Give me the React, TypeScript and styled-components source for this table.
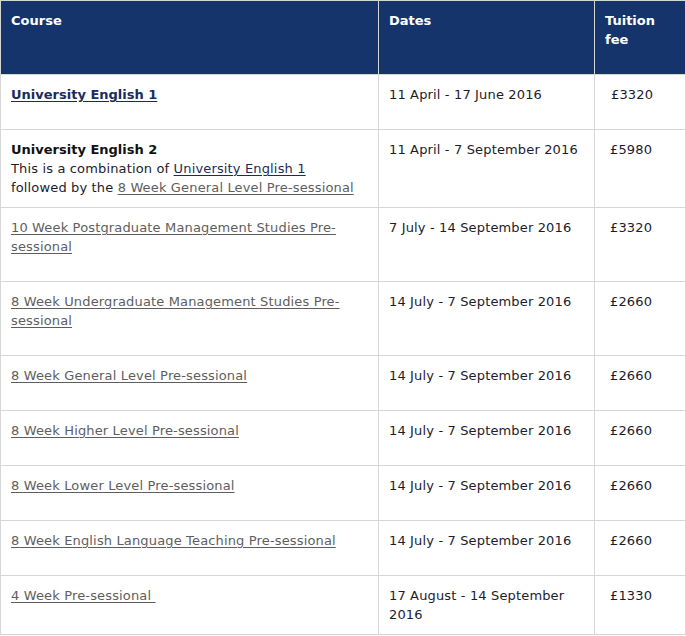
import React from "react";
import styled, { createGlobalStyle } from "styled-components";

const Global = createGlobalStyle`
  html, body { margin: 0; padding: 0; background: #fff; }
  body { font-family: "DejaVu Sans", Verdana, sans-serif; font-size: 13px; line-height: 19px; color: #1c1c2c; letter-spacing: 0.15px; }
`;

const Table = styled.table`
  width: 685px;
  border-collapse: collapse;
  table-layout: fixed;
  border: 1px solid #d6d6d6;
`;

const Col = styled.col<{ $w: number }>`
  width: ${(p) => p.$w}px;
`;

const Row = styled.tr<{ $h: number }>`
  height: ${(p) => p.$h}px;
`;

const Th = styled.th`
  background: #15346b;
  color: #fff;
  font-weight: bold;
  text-align: left;
  vertical-align: top;
  padding: 10px 10px;
  border: 1px solid #d6d6d6;
  letter-spacing: 0;
`;

const Td = styled.td<{ $indent?: number }>`
  vertical-align: top;
  padding: 10px 10px 10px ${(p) => 10 + (p.$indent ?? 0)}px;
  border: 1px solid #d6d6d6;
`;

const Title = styled.strong`
  display: block;
  font-weight: bold;
  color: #111;
  letter-spacing: 0;
`;

const Link = styled.a<{ $tone: "navy" | "grey" }>`
  color: ${(p) => (p.$tone === "navy" ? "#1b2b5e" : "#5e5e5e")};
  text-decoration: underline;
  text-underline-offset: 2px;
`;

const StrongLink = styled(Link)`
  font-weight: bold;
  letter-spacing: 0;
`;

type Course = { name: string; dates: string; fee: string; h: number };

const courses: Course[] = [
  { name: "10 Week Postgraduate Management Studies Pre-sessional", dates: "7 July - 14 September 2016", fee: "£3320", h: 74 },
  { name: "8 Week Undergraduate Management Studies Pre-sessional", dates: "14 July - 7 September 2016", fee: "£2660", h: 74 },
  { name: "8 Week General Level Pre-sessional", dates: "14 July - 7 September 2016", fee: "£2660", h: 55 },
  { name: "8 Week Higher Level Pre-sessional", dates: "14 July - 7 September 2016", fee: "£2660", h: 55 },
  { name: "8 Week Lower Level Pre-sessional", dates: "14 July - 7 September 2016", fee: "£2660", h: 55 },
  { name: "8 Week English Language Teaching Pre-sessional", dates: "14 July - 7 September 2016", fee: "£2660", h: 55 },
  { name: "4 Week Pre-sessional\u00a0", dates: "17 August - 14 September 2016", fee: "£1330", h: 58 },
];

export default function App() {
  return (
    <>
      <Global />
      <Table>
        <colgroup>
          <Col $w={378} />
          <Col $w={216} />
          <Col $w={91} />
        </colgroup>
        <thead>
          <Row $h={74}>
            <Th>Course</Th>
            <Th>Dates</Th>
            <Th>Tuition fee</Th>
          </Row>
        </thead>
        <tbody>
          <Row $h={55}>
            <Td>
              <StrongLink $tone="navy" href="#">University English 1</StrongLink>
            </Td>
            <Td>11 April - 17 June 2016</Td>
            <Td $indent={6}>£3320</Td>
          </Row>
          <Row $h={78}>
            <Td>
              <Title>University English 2</Title>
              This is a combination of <Link $tone="navy" href="#">University English 1</Link>
              <br />
              followed by the <Link $tone="grey" href="#">8 Week General Level Pre-sessional</Link>
            </Td>
            <Td>11 April - 7 September 2016</Td>
            <Td $indent={5}>£5980</Td>
          </Row>
          {courses.map((c) => (
            <Row $h={c.h} key={c.name}>
              <Td>
                <Link $tone="grey" href="#">{c.name}</Link>
              </Td>
              <Td>{c.dates}</Td>
              <Td $indent={5}>{c.fee}</Td>
            </Row>
          ))}
        </tbody>
      </Table>
    </>
  );
}
